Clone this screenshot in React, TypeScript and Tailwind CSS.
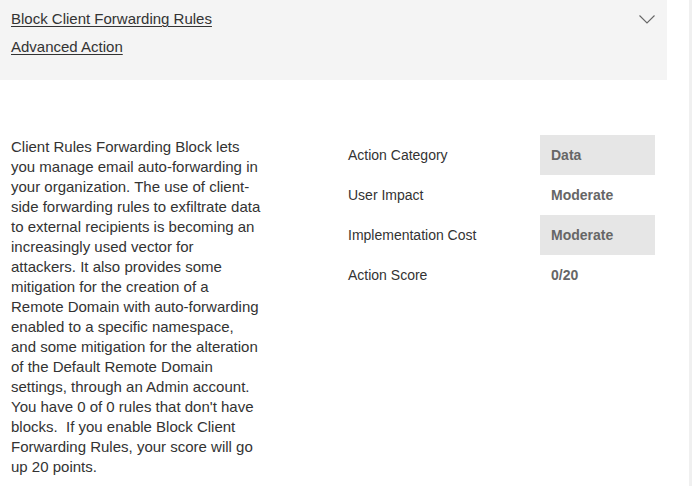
import React from 'react';

const rows = [
  { label: 'Action Category', value: 'Data', shaded: true },
  { label: 'User Impact', value: 'Moderate', shaded: false },
  { label: 'Implementation Cost', value: 'Moderate', shaded: true },
  { label: 'Action Score', value: '0/20', shaded: false },
];

export default function App() {
  return (
    <div className="flex w-[700px] h-[486px] bg-white overflow-hidden font-['Liberation_Sans',Arial,sans-serif] text-[#333]">
      <div className="w-[689px] flex flex-col">
        {/* header */}
        <div className="w-[667px] h-[80px] bg-[#f4f4f4] flex justify-between pl-[11px] pr-[12px] pt-[9px]">
          <div className="flex flex-col gap-[8px] text-[15px] leading-[20px]">
            <a className="underline underline-offset-2 decoration-1 cursor-pointer">Block Client Forwarding Rules</a>
            <a className="underline underline-offset-2 decoration-1 cursor-pointer">Advanced Action</a>
          </div>
          <svg width="16" height="9" viewBox="0 0 16 9" className="mt-[6px]">
            <path d="M0.5 0.5 L8 8 L15.5 0.5" fill="none" stroke="#666" strokeWidth="1.1" />
          </svg>
        </div>

        {/* body */}
        <div className="flex pt-[55px]">
          <p className="ml-[11px] w-[250px] shrink-0 text-[15px] leading-[20px] pt-[2px]">
            Client Rules Forwarding Block lets you manage email auto-forwarding in your organization. The use of client-side forwarding rules to exfiltrate data to external recipients is becoming an increasingly used vector for attackers. It also provides some mitigation for the creation of a Remote Domain with auto-forwarding enabled to a specific namespace, and some mitigation for the alteration of the Default Remote Domain settings, through an Admin account. You have 0 of 0 rules that don't have blocks.&nbsp; If you enable Block Client Forwarding Rules, your score will go up 20 points.
          </p>
          <div className="ml-[77px] flex flex-col">
            {rows.map((r) => (
              <div key={r.label} className="flex h-[40px] text-[14px]">
                <div className="w-[202px] pl-[10px] flex items-center">{r.label}</div>
                <div className={`w-[115px] pl-[11px] flex items-center font-bold text-[#666] ${r.shaded ? 'bg-[#e6e6e6]' : ''}`}>
                  {r.value}
                </div>
              </div>
            ))}
          </div>
        </div>
      </div>
      <div className="w-[3px] h-full bg-[#f0f0f0]" />
    </div>
  );
}
